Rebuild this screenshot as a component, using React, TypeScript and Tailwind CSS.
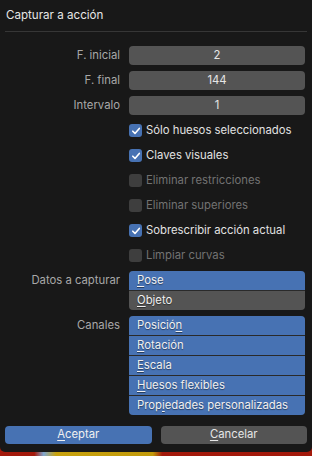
import type { ReactNode } from 'react'

const fields = [
    { label: 'F. inicial', value: '2' },
    { label: 'F. final', value: '144' },
    { label: 'Intervalo', value: '1' },
]

const checks = [
    { label: 'Sólo huesos seleccionados', checked: true, enabled: true },
    { label: 'Claves visuales', checked: true, enabled: true },
    { label: 'Eliminar restricciones', checked: false, enabled: false },
    { label: 'Eliminar superiores', checked: false, enabled: false },
    { label: 'Sobrescribir acción actual', checked: true, enabled: true },
    { label: 'Limpiar curvas', checked: false, enabled: false },
]

function U({ children }: { children: ReactNode }) {
    return <span className="underline decoration-1 underline-offset-[2px]">{children}</span>
}

function Row({ label, children }: { label?: string; children: ReactNode }) {
    return (
        <div className="flex items-start gap-[9px]">
            <div className="flex h-[19px] w-[115px] shrink-0 items-center justify-end text-[#a8a8a8]">{label}</div>
            <div className="w-[176px]">{children}</div>
        </div>
    )
}

function Check({ checked }: { checked: boolean }) {
    if (!checked) return <span className="h-[13px] w-[13px] rounded-[3px] bg-[#3e3e3e]" />
    return (
        <span className="flex h-[13px] w-[13px] items-center justify-center rounded-[3px] bg-[#4772b3]">
            <svg width="10" height="10" viewBox="0 0 10 10" fill="none">
                <path d="M1.8 5.2 L4 7.4 L8.3 2.4" stroke="#fff" strokeWidth="1.6" strokeLinecap="round" strokeLinejoin="round" />
            </svg>
        </span>
    )
}

function EnumItem({ active, children }: { active: boolean; children: ReactNode }) {
    return (
        <div
            className={
                'flex h-[19px] items-center pl-2 text-[#f0f0f0] [text-shadow:0_1px_1px_rgba(0,0,0,0.45)] ' +
                (active ? 'bg-[#4772b3]' : 'bg-[#545454]')
            }
        >
            {children}
        </div>
    )
}

export default function App() {
    return (
        <div
            className="flex h-[456px] w-[312px] flex-col bg-[linear-gradient(90deg,#a3190b_0%,#a3190b_11%,#7fa6cf_14%,#c8a20e_18%,#c29a0a_49%,#a3190b_52%,#a3190b_100%)] text-[11.3px] leading-none"
            style={{ fontFamily: 'Inter, "Noto Sans", sans-serif' }}
        >
            <div className="flex h-[452px] flex-col rounded-b-[5px] bg-[#181818] px-[5px]">
                <div className="flex h-[32px] items-center border-b border-[#363636] pl-px text-[11.6px] text-[#e6e6e6]">
                    Capturar a acción
                </div>

                <div className="mt-[14px] flex flex-col gap-[6px]">
                    {fields.map((f) => (
                        <Row key={f.label} label={f.label}>
                            <div className="flex h-[19px] items-center justify-center rounded-[4px] bg-[#545454] text-[#e6e6e6]">
                                {f.value}
                            </div>
                        </Row>
                    ))}

                    {checks.map((c) => (
                        <Row key={c.label}>
                            <div className={'flex h-[19px] items-center gap-[4px] ' + (c.enabled ? 'text-[#e2e2e2]' : 'text-[#727272]')}>
                                <Check checked={c.checked} />
                                <span>{c.label}</span>
                            </div>
                        </Row>
                    ))}

                    <Row label="Datos a capturar">
                        <div className="flex flex-col gap-px overflow-hidden rounded-[4px] bg-[#2a2a2a]">
                            <EnumItem active>
                                <U>P</U>ose
                            </EnumItem>
                            <EnumItem active={false}>
                                <U>O</U>bjeto
                            </EnumItem>
                        </div>
                    </Row>

                    <Row label="Canales">
                        <div className="flex flex-col gap-px overflow-hidden rounded-[4px] bg-[#2a2a2a]">
                            <EnumItem active>
                                Posició<U>n</U>
                            </EnumItem>
                            <EnumItem active>
                                <U>R</U>otación
                            </EnumItem>
                            <EnumItem active>
                                <U>E</U>scala
                            </EnumItem>
                            <EnumItem active>
                                <U>H</U>uesos flexibles
                            </EnumItem>
                            <EnumItem active>
                                Prop<U>i</U>edades personalizadas
                            </EnumItem>
                        </div>
                    </Row>
                </div>

                <div className="mt-[11px] flex gap-[9px]">
                    <button className="flex h-[18px] flex-1 items-center justify-center rounded-[4px] bg-[#4772b3] text-[#f0f0f0]">
                        <U>A</U>ceptar
                    </button>
                    <button className="flex h-[18px] flex-1 items-center justify-center rounded-[4px] bg-[#545454] text-[#e6e6e6]">
                        <U>C</U>ancelar
                    </button>
                </div>
            </div>
        </div>
    )
}
